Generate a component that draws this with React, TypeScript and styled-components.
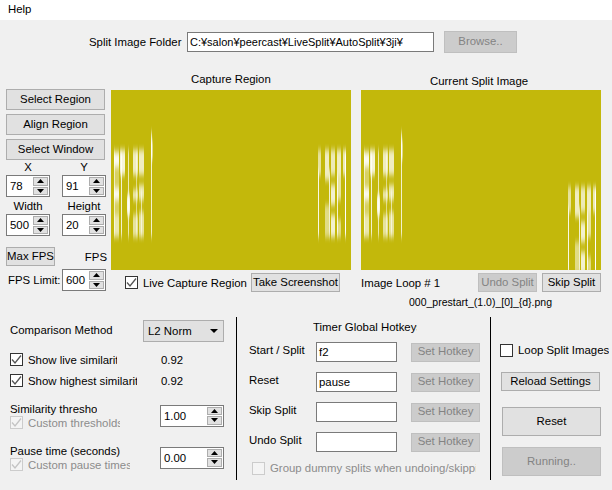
import { FC } from "react";
import styled, { createGlobalStyle } from "styled-components";

type Streak = [number, number, number, number, number];

// x, width, top, height, opacity of the smeared title letters
const startStreaks: Streak[] = [
  [3, 5, 0, 87, 0.35],
  [3, 5, 3, 14, 0.9],
  [3, 5, 38, 12, 0.9],
  [3, 5, 65, 22, 0.5],
  [3, 1, 0, 87, 0.6],
  [9, 5, 0, 25, 0.85],
  [10, 1, 0, 87, 0.8],
  [17, 1, 0, 87, 0.7],
  [16, 3, 45, 20, 0.9],
  [22, 5, 0, 25, 0.75],
  [22, 5, 40, 10, 0.7],
  [22, 5, 65, 22, 0.6],
  [25, 1, 0, 87, 0.5],
  [28, 5, 0, 25, 0.75],
  [28, 5, 35, 15, 0.7],
  [28, 5, 62, 25, 0.6],
  [30, 1, 40, 47, 0.6],
  [40, 1, -18, 105, 0.8],
  [40, 1.5, -10, 20, 1],
];

const resetStreaks: Streak[] = [
  [0, 1, 20, 67, 0.9],
  [0, 3, 0, 25, 0.6],
  [7, 4, 0, 30, 0.75],
  [7, 4, 55, 32, 0.5],
  [11, 1, 20, 67, 0.8],
  [13, 4, 0, 25, 0.7],
  [13, 4, 35, 20, 0.8],
  [13, 4, 65, 22, 0.8],
  [19, 4, 0, 25, 0.75],
  [19, 4, 25, 25, 0.6],
  [19, 4, 70, 17, 0.5],
  [19, 1, 25, 62, 0.8],
  [25, 3, 0, 25, 0.7],
  [27, 1, 0, 87, 1],
];

const CaptureArt: FC<{ resetX: number; resetY: number }> = ({ resetX, resetY }) => (
  <svg width="240" height="180" viewBox="0 0 240 180">
    <defs>
      <filter id="smear" x="-20%" y="-20%" width="140%" height="140%">
        <feGaussianBlur stdDeviation="0.6 3" />
      </filter>
    </defs>
    <rect width="240" height="180" fill="#c3b80b" />
    <g filter="url(#smear)" fill="#fff">
      {startStreaks.map(([x, w, y, h, o], i) => (
        <rect key={i} x={x} y={60 + y} width={w} height={h} opacity={o} />
      ))}
      {resetStreaks.map(([x, w, y, h, o], i) => (
        <rect key={i} x={resetX + x} y={resetY + y} width={w} height={h} opacity={o} />
      ))}
    </g>
  </svg>
);

const SpinArrows = () => (
  <SpinBox>
    <SpinPart>
      <svg width="7" height="4" viewBox="0 0 7 4">
        <path d="M3.5 0L7 4H0z" fill="#000" />
      </svg>
    </SpinPart>
    <SpinPart>
      <svg width="7" height="4" viewBox="0 0 7 4">
        <path d="M0 0h7L3.5 4z" fill="#000" />
      </svg>
    </SpinPart>
  </SpinBox>
);

const Spinner: FC<{ value: string; wide?: boolean }> = ({ value, wide }) => (
  <SpinField $wide={wide}>
    <SpinValue>{value}</SpinValue>
    <SpinArrows />
  </SpinField>
);

const Check: FC<{ checked?: boolean; disabled?: boolean; children: string; width?: number }> = ({
  checked,
  disabled,
  children,
  width,
}) => (
  <CheckRow $disabled={disabled}>
    <CheckBox $disabled={disabled}>
      {checked && (
        <svg width="11" height="11" viewBox="0 0 11 11">
          <path d="M1 5.5L4 9L10 1.5" fill="none" stroke={disabled ? "#c4c4c4" : "#555"} strokeWidth="1.3" />
        </svg>
      )}
    </CheckBox>
    <ClipLabel $width={width}>{children}</ClipLabel>
  </CheckRow>
);

const hotkeys = [
  { label: "Start / Split", value: "f2" },
  { label: "Reset", value: "pause" },
  { label: "Skip Split", value: "" },
  { label: "Undo Split", value: "" },
];

export default function App() {
  return (
    <>
      <GlobalStyle />
      <Window>
        <MenuBar>Help</MenuBar>
        <FolderRow>
          <FolderLabel>Split Image Folder</FolderLabel>
          <PathField>C:¥salon¥peercast¥LiveSplit¥AutoSplit¥3ji¥</PathField>
          <BrowseButton disabled>Browse..</BrowseButton>
        </FolderRow>

        <MiddleRow>
          <LeftColumn>
            <SideButton>Select Region</SideButton>
            <SideButton>Align Region</SideButton>
            <SideButton>Select Window</SideButton>
            <CoordGrid>
              <CoordCell>
                <CoordLabel>X</CoordLabel>
                <Spinner value="78" />
              </CoordCell>
              <CoordCell>
                <CoordLabel>Y</CoordLabel>
                <Spinner value="91" />
              </CoordCell>
              <CoordCell>
                <CoordLabel>Width</CoordLabel>
                <Spinner value="500" />
              </CoordCell>
              <CoordCell>
                <CoordLabel>Height</CoordLabel>
                <Spinner value="20" />
              </CoordCell>
            </CoordGrid>
            <FpsRow>
              <MaxFpsButton>Max FPS</MaxFpsButton>
              <span>FPS</span>
            </FpsRow>
            <LimitRow>
              <LimitLabel>FPS Limit:</LimitLabel>
              <Spinner value="600" />
            </LimitRow>
          </LeftColumn>

          <ImageColumn>
            <ImageTitle>Capture Region</ImageTitle>
            <CaptureArt resetX={207} resetY={60} />
            <ImageFooter>
              <Check checked>Live Capture Region</Check>
              <ActionButton $width={89}>Take Screenshot</ActionButton>
            </ImageFooter>
          </ImageColumn>

          <ImageColumn $offset>
            <ImageTitle $right>Current Split Image</ImageTitle>
            <CaptureArt resetX={207} resetY={97} />
            <SplitFooter>
              <LoopLabel>Image Loop # 1</LoopLabel>
              <ActionButton $width={59} disabled>
                Undo Split
              </ActionButton>
              <ActionButton $width={59}>Skip Split</ActionButton>
            </SplitFooter>
            <FileName>000_prestart_(1.0)_[0]_{"{d}"}.png</FileName>
          </ImageColumn>
        </MiddleRow>

        <BottomRow>
          <SettingsColumn>
            <MethodRow>
              <MethodLabel>Comparison Method</MethodLabel>
              <Dropdown>
                L2 Norm
                <svg width="8" height="4" viewBox="0 0 8 4">
                  <path d="M0 0h8L4 4z" fill="#000" />
                </svg>
              </Dropdown>
            </MethodRow>
            <SimilarityRow>
              <Check checked width={89}>
                Show live similarity
              </Check>
              <span>0.92</span>
            </SimilarityRow>
            <SimilarityRow>
              <Check checked width={109}>
                Show highest similarity
              </Check>
              <span>0.92</span>
            </SimilarityRow>
            <ThresholdRow $first>
              <div>
                <ClipLabel $width={87} $block>
                  Similarity threshold
                </ClipLabel>
                <Check checked disabled width={92}>
                  Custom thresholds
                </Check>
              </div>
              <Spinner value="1.00" wide />
            </ThresholdRow>
            <ThresholdRow>
              <div>
                <ClipLabel $block>Pause time (seconds)</ClipLabel>
                <Check checked disabled width={102}>
                  Custom pause times
                </Check>
              </div>
              <Spinner value="0.00" wide />
            </ThresholdRow>
          </SettingsColumn>

          <HotkeyColumn>
            <HotkeyTitle>Timer Global Hotkeys</HotkeyTitle>
            {hotkeys.map((h) => (
              <HotkeyRow key={h.label}>
                <HotkeyLabel>{h.label}</HotkeyLabel>
                <HotkeyField>{h.value}</HotkeyField>
                <HotkeyButton disabled>Set Hotkey</HotkeyButton>
              </HotkeyRow>
            ))}
            <DummyRow>
              <Check disabled width={206}>
                Group dummy splits when undoing/skipping
              </Check>
            </DummyRow>
          </HotkeyColumn>

          <RunColumn>
            <Check>Loop Split Images</Check>
            <ReloadButton>Reload Settings</ReloadButton>
            <RunButton>Reset</RunButton>
            <RunButton disabled>Running..</RunButton>
          </RunColumn>
        </BottomRow>
      </Window>
    </>
  );
}

const GlobalStyle = createGlobalStyle`
  html, body {
    margin: 0;
    background: #f0f0f0;
  }
  * {
    box-sizing: border-box;
  }
  svg {
    display: block;
  }
`;

const Window = styled.div`
  width: 612px;
  height: 490px;
  overflow: hidden;
  background: #f0f0f0;
  color: #000;
  font: 11.4px/14px "Liberation Sans", Arial, sans-serif;
`;

const MenuBar = styled.div`
  height: 20px;
  padding: 2px 8px;
  background: #fff;
`;

const FolderRow = styled.div`
  display: flex;
  align-items: center;
  height: 22px;
  margin-top: 11px;
  padding-left: 89px;
`;

const FolderLabel = styled.span`
  width: 98px;
  white-space: nowrap;
`;

const Button = styled.button`
  display: flex;
  align-items: center;
  justify-content: center;
  padding: 0 0 2px;
  border: 1px solid #adadad;
  background: #e1e1e1;
  color: #000;
  font: inherit;
  white-space: nowrap;
  overflow: hidden;

  &:disabled {
    border-color: #bfbfbf;
    background: #cccccc;
    color: #838383;
  }
`;

const PathField = styled.div`
  width: 247px;
  height: 20px;
  padding: 2px;
  border: 1px solid #7a7a7a;
  background: #fff;
  font-size: 11px;
  white-space: nowrap;
  overflow: hidden;
`;

const BrowseButton = styled(Button)`
  width: 73px;
  height: 22px;
  margin-left: 10px;
`;

const MiddleRow = styled.div`
  display: flex;
  margin-top: 19px;
`;

const LeftColumn = styled.div`
  display: flex;
  flex-direction: column;
  width: 100px;
  margin: 17px 0 0 6px;
`;

const SideButton = styled(Button)`
  width: 99px;
  height: 21px;
  margin-bottom: 4px;
`;

const CoordGrid = styled.div`
  display: grid;
  grid-template-columns: 44px 44px;
  column-gap: 12px;
  row-gap: 2px;
  margin-top: -4px;
`;

const CoordCell = styled.div`
  display: flex;
  flex-direction: column;
  align-items: center;
  gap: 1px;
`;

const CoordLabel = styled.span`
  height: 14px;
  line-height: 14px;
`;

const SpinField = styled.div<{ $wide?: boolean }>`
  display: flex;
  align-items: center;
  justify-content: space-between;
  width: ${({ $wide }) => ($wide ? "64px" : "44px")};
  height: 22px;
  padding: 1px;
  border: 1px solid #7a7a7a;
  background: #fff;
`;

const SpinValue = styled.span`
  padding-left: 2px;
`;

const SpinBox = styled.div`
  display: flex;
  flex-direction: column;
  gap: 1px;
  width: 15px;
  height: 18px;
`;

const SpinPart = styled.div`
  display: flex;
  flex: 1;
  align-items: center;
  justify-content: center;
  border: 1px solid #adadad;
  background: #e1e1e1;
`;

const FpsRow = styled.div`
  display: flex;
  align-items: center;
  justify-content: space-between;
  width: 101px;
  margin-top: 11px;
`;

const MaxFpsButton = styled(Button)`
  width: 49px;
  height: 19px;
`;

const LimitRow = styled.div`
  display: flex;
  align-items: center;
  margin-top: 3px;
  padding-left: 2px;
`;

const LimitLabel = styled.span`
  width: 54px;
  white-space: nowrap;
`;

const ImageColumn = styled.div<{ $offset?: boolean }>`
  width: 240px;
  margin-left: ${({ $offset }) => ($offset ? "10px" : "5px")};
`;

const ImageTitle = styled.div<{ $right?: boolean }>`
  height: 14px;
  margin-bottom: 4px;
  padding-top: ${({ $right }) => ($right ? "2px" : "0")};
  padding-left: ${({ $right }) => ($right ? "69px" : "80px")};
  white-space: nowrap;
`;

const ImageFooter = styled.div`
  display: flex;
  align-items: center;
  justify-content: space-between;
  width: 229px;
  height: 19px;
  margin-top: 3px;
  padding-left: 14px;
`;

const SplitFooter = styled.div`
  display: flex;
  align-items: center;
  gap: 5px;
  height: 19px;
  margin-top: 3px;
`;

const LoopLabel = styled.span`
  width: 112px;
`;

const ActionButton = styled(Button)<{ $width: number }>`
  width: ${({ $width }) => $width}px;
  height: 19px;
`;

const FileName = styled.div`
  margin-top: 3px;
  padding-left: 48px;
  font-size: 10.5px;
  white-space: nowrap;
`;

const BottomRow = styled.div`
  display: flex;
  height: 163px;
  margin-top: 8px;
`;

const SettingsColumn = styled.div`
  flex: none;
  width: 237px;
  padding: 3px 12px 0 10px;
  border-right: 1px solid #000;
`;

const MethodRow = styled.div`
  display: flex;
  align-items: center;
  justify-content: space-between;
  height: 22px;
  margin-bottom: 7px;
`;

const MethodLabel = styled.span`
  padding-bottom: 3px;
`;

const Dropdown = styled.div`
  display: flex;
  align-items: center;
  justify-content: space-between;
  width: 81px;
  height: 22px;
  padding: 0 5px 0 4px;
  border: 1px solid #adadad;
  background: #e1e1e1;
`;

const SimilarityRow = styled.div`
  display: grid;
  grid-template-columns: 151px 1fr;
  align-items: center;
  height: 21px;
`;

const CheckRow = styled.div<{ $disabled?: boolean }>`
  display: flex;
  align-items: center;
  gap: 5px;
  color: ${({ $disabled }) => ($disabled ? "#8c8c8c" : "#000")};
  white-space: nowrap;
`;

const CheckBox = styled.div<{ $disabled?: boolean }>`
  display: flex;
  flex: none;
  align-items: center;
  justify-content: center;
  width: 13px;
  height: 13px;
  border: 1px solid ${({ $disabled }) => ($disabled ? "#cccccc" : "#333")};
  background: ${({ $disabled }) => ($disabled ? "#f4f4f4" : "#fff")};
`;

const ClipLabel = styled.span<{ $width?: number; $block?: boolean }>`
  display: ${({ $block }) => ($block ? "block" : "inline")};
  width: ${({ $width }) => ($width ? `${$width}px` : "auto")};
  overflow: hidden;
  white-space: nowrap;
`;

const ThresholdRow = styled.div<{ $first?: boolean }>`
  display: flex;
  align-items: center;
  justify-content: space-between;
  width: 214px;
  height: 33px;
  margin-top: ${({ $first }) => ($first ? "8px" : "9px")};
`;

const HotkeyColumn = styled.div`
  flex: none;
  width: 254px;
  padding: 3px 0 0 12px;
  border-right: 1px solid #000;
`;

const HotkeyTitle = styled.div`
  width: 104px;
  height: 14px;
  margin: 0 0 8px 64px;
  overflow: hidden;
  white-space: nowrap;
`;

const HotkeyRow = styled.div`
  display: flex;
  align-items: center;
  height: 20px;
  margin-bottom: 10px;
`;

const HotkeyLabel = styled.span`
  width: 67px;
  margin-top: -4px;
  white-space: nowrap;
`;

const HotkeyField = styled.div`
  width: 81px;
  height: 20px;
  padding: 2px;
  border: 1px solid #7a7a7a;
  background: #fff;
`;

const HotkeyButton = styled(Button)`
  width: 69px;
  height: 19px;
  margin-left: 14px;
`;

const DummyRow = styled.div`
  margin: -1px 0 0 3px;
`;

const RunColumn = styled.div`
  display: flex;
  flex-direction: column;
  align-items: flex-start;
  flex: 1;
  min-width: 0;
  padding: 26px 0 0 9px;
`;

const ReloadButton = styled(Button)`
  width: 99px;
  height: 19px;
  margin: 15px 0 0 1px;
`;

const RunButton = styled(Button)`
  width: 99px;
  height: 29px;
  margin: 16px 0 0 2px;

  & + & {
    margin-top: 11px;
  }
`;
